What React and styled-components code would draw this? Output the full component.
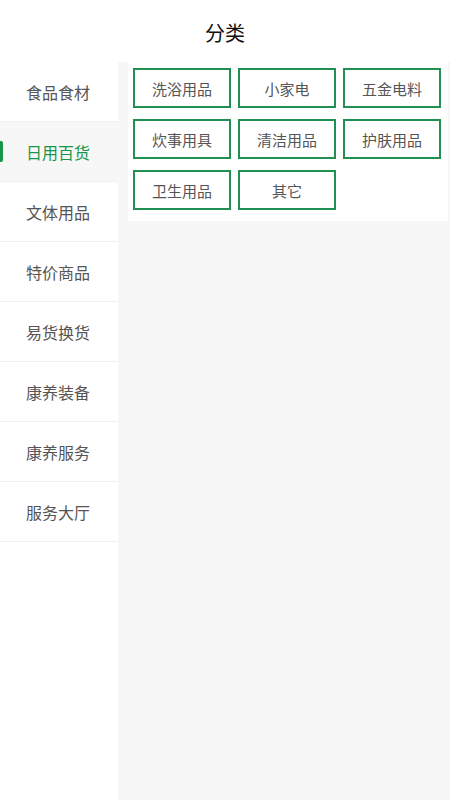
import React, { useState } from "react";
import styled, { createGlobalStyle } from "styled-components";

const Global = createGlobalStyle`
  html, body {
    margin: 0;
    padding: 0;
    background: #fff;
    font-family: "Noto Sans CJK SC", "Noto Sans", sans-serif;
  }
`;

const Page = styled.div`
  display: flex;
  flex-direction: column;
  width: 450px;
  height: 800px;
  overflow: hidden;
`;

const Header = styled.div`
  height: 62px;
  flex-shrink: 0;
  display: flex;
  align-items: center;
  justify-content: center;
  font-size: 20px;
  color: #111;
  background: #fff;
  padding-top: 3px;
  box-sizing: border-box;
`;

const Body = styled.div`
  flex: 1;
  display: flex;
  min-height: 0;
`;

const Side = styled.div`
  width: 118px;
  flex-shrink: 0;
  background: #fff;
  display: flex;
  flex-direction: column;
`;

const SideItem = styled.div`
  position: relative;
  height: 60px;
  box-sizing: border-box;
  display: flex;
  align-items: center;
  padding-left: 26px;
  font-size: 16px;
  color: ${(p) => (p.$active ? "#16964a" : "#555")};
  background: ${(p) => (p.$active ? "#f7f7f7" : "#fff")};
  border-bottom: 1px solid #f0f0f0;
  &::before {
    content: "";
    display: ${(p) => (p.$active ? "block" : "none")};
    position: absolute;
    left: 0;
    top: 19px;
    width: 3px;
    height: 21px;
    background: #16964a;
    border-radius: 0 2px 2px 0;
  }
`;

const Main = styled.div`
  flex: 1;
  background: #f7f7f7;
  padding: 0 2px 0 10px;
`;

const Panel = styled.div`
  background: #fff;
  padding: 6px 6px 11px 5px;
  display: grid;
  grid-template-columns: repeat(3, 98px);
  column-gap: 7px;
  row-gap: 11px;
`;

const Tag = styled.div`
  height: 40px;
  box-sizing: border-box;
  border: 2px solid #1f8f52;
  display: flex;
  align-items: center;
  justify-content: center;
  font-size: 15px;
  color: #555;
`;

const cats = ["食品食材", "日用百货", "文体用品", "特价商品", "易货换货", "康养装备", "康养服务", "服务大厅"];
const tags = ["洗浴用品", "小家电", "五金电料", "炊事用具", "清洁用品", "护肤用品", "卫生用品", "其它"];

export default function App() {
  const [active, setActive] = useState(1);
  return (
    <Page>
      <Global />
      <Header>分类</Header>
      <Body>
        <Side>
          {cats.map((c, i) => (
            <SideItem key={c} $active={i === active} onClick={() => setActive(i)}>
              {c}
            </SideItem>
          ))}
        </Side>
        <Main>
          <Panel>
            {tags.map((t) => (
              <Tag key={t}>{t}</Tag>
            ))}
          </Panel>
        </Main>
      </Body>
    </Page>
  );
}
